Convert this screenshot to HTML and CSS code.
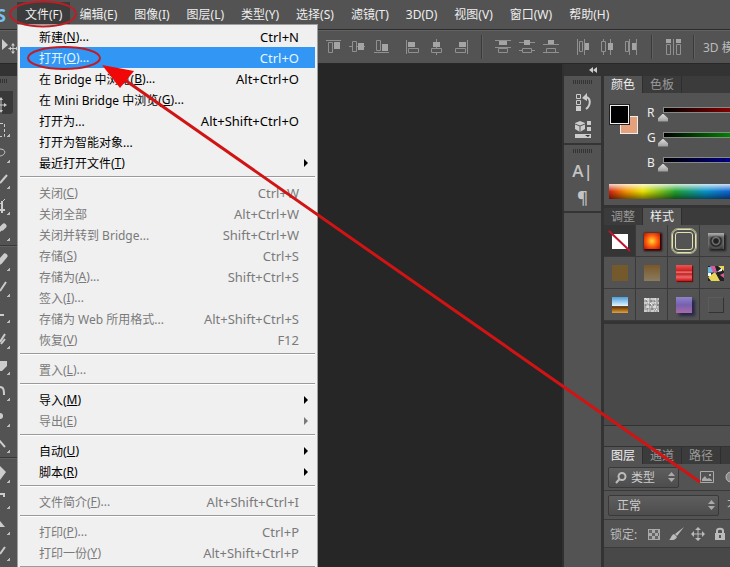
FILE: index.html
```html
<!DOCTYPE html>
<html lang="zh-CN">
<head>
<meta charset="utf-8">
<title>Photoshop</title>
<link rel="stylesheet" href="styles.css">
</head>
<body>
<div class="app">
  <header class="menubar">
    <span class="logo" aria-hidden="true">S</span>
    <nav class="menus">
      <button class="open">文件(F)</button><button>编辑(E)</button><button>图像(I)</button><button>图层(L)</button><button>类型(Y)</button><button>选择(S)</button><button>滤镜(T)</button><button>3D(D)</button><button>视图(V)</button><button>窗口(W)</button><button>帮助(H)</button>
    </nav>
  </header>

  <div class="options">
    <svg class="move-icon" width="17" height="20" viewBox="0 0 17 20"><path d="M2 2v11l6-5z" fill="#ccc"/><path d="M13 7v9M8.500 11.500h9" stroke="#ccc"/><path d="M11 8.500l2-2.500 2 2.500zM11 14.500l2 2.500 2-2.500zM11 9.500l-2.500 2 2.500 2zM16 9.500v4l1-1v-2z" fill="#ccc"/></svg>
    <div class="align">
      <button aria-label="顶对齐"><svg viewBox="0 0 24 24"><path d="M5 5.500h15M7.500 7.500h4v10h-4z"/><path class="f" d="M13 7h6v7h-6z"/></svg></button>
      <button aria-label="垂直居中对齐"><svg viewBox="0 0 24 24"><path d="M4 11.500h3M11 11.500h9M7.500 6.500h4v10h-4z"/><path class="f" d="M13 8h6v7h-6z"/></svg></button>
      <button aria-label="底对齐"><svg viewBox="0 0 24 24"><path d="M5 17.500h15M7.500 5.500h4v10h-4z"/><path class="f" d="M13 9h6v7h-6z"/></svg></button>
    </div>
    <div class="align">
      <button aria-label="左对齐"><svg viewBox="0 0 24 24"><path d="M5.500 5v14M7.500 13.500h10v4h-10z"/><path class="f" d="M7 7h7v5H7z"/></svg></button>
      <button aria-label="水平居中对齐"><svg viewBox="0 0 24 24"><path d="M11.500 4v9M11.500 17v3M6.500 13.500h10v4h-10z"/><path class="f" d="M8 7h7v5H8z"/></svg></button>
      <button aria-label="右对齐"><svg viewBox="0 0 24 24"><path d="M18.500 5v14M6.500 13.500h10v4h-10z"/><path class="f" d="M10 7h7v5h-7z"/></svg></button>
    </div>
    <i class="rule"></i>
    <div class="align">
      <button aria-label="按顶分布"><svg viewBox="0 0 24 24"><path d="M4 5.500h16M4 12.500h16M7.500 13.500h9v4h-9z"/><path class="f" d="M8 6h8v4H8z"/></svg></button>
      <button aria-label="按垂直居中分布"><svg viewBox="0 0 24 24"><path d="M4 7.500h16M4 15.500h3M17 15.500h3M7.500 13.500h9v4h-9z"/><path class="f" d="M9 5h6v5H9z"/></svg></button>
      <button aria-label="按底分布"><svg viewBox="0 0 24 24"><path d="M4 9.500h16M4 17.500h16M7.500 13.500h9v4h-9z"/><path class="f" d="M9 5h6v4H9z"/></svg></button>
    </div>
    <div class="align">
      <button aria-label="按左分布"><svg viewBox="0 0 24 24"><path d="M6.500 4v16M13.500 4v16M8.500 6.500h3v10h-3z"/><path class="f" d="M14 8h4v7h-4z"/></svg></button>
      <button aria-label="按水平居中分布"><svg viewBox="0 0 24 24"><path d="M8.500 4v3M8.500 16v4M15.500 4v16M6.500 6.500h4v10h-4z"/><path class="f" d="M13 8h5v7h-5z"/></svg></button>
      <button aria-label="按右分布"><svg viewBox="0 0 24 24"><path d="M10.500 4v16M17.500 4v16M6.500 6.500h3v10h-3z"/><path class="f" d="M13 8h4v7h-4z"/></svg></button>
    </div>
    <i class="rule"></i>
    <button aria-label="自动对齐图层"><svg viewBox="0 0 24 24"><path d="M5.500 9.500h4v10h-4zM15.500 9.500h4v10h-4zM12.500 4v16"/><path class="f" d="M5 4h5v4H5zM15 4h5v4h-5z"/></svg></button>
    <i class="rule"></i>
    <span class="mode">3D 模式:</span>
  </div>

  <div class="work">
    <aside class="tools" aria-label="工具">
      <div class="grip"><i></i></div>
      <button class="active" aria-label="移动"><svg viewBox="0 0 17 26"><path class="f" d="M1 9l2 3H-1zM1 25l2-3H-1zM7 17l-3-2v4z"/><path d="M1 11v12M0 17h5"/></svg></button>
      <button aria-label="选框"><svg viewBox="0 0 17 26"><path stroke-dasharray="3 2" d="M0 9.500h4.500v13H0"/></svg></button>
      <button aria-label="套索"><svg viewBox="0 0 17 26"><path d="M0 9c7 0 6 7-1 7"/></svg></button>
      <button aria-label="快速选择"><svg viewBox="0 0 17 26"><path class="w" d="M7 9l-7 8"/></svg></button>
      <button aria-label="裁剪"><svg viewBox="0 0 17 26"><path class="w" d="M2 9v12M0 18h5"/><path d="M5 7L0 12"/></svg></button>
      <button aria-label="吸管"><svg viewBox="0 0 17 26"><path class="b" d="M4 8l-2 2"/><path class="w" d="M3 9l-4 5"/></svg></button>
      <hr>
      <button aria-label="修复"><svg viewBox="0 0 17 26"><path class="b" d="M5 8l-5 6"/></svg></button>
      <button aria-label="画笔"><svg viewBox="0 0 17 26"><path class="w" d="M6 8l-6 9"/></svg></button>
      <button aria-label="图章"><svg viewBox="0 0 17 26"><path class="w" d="M0 15h4"/></svg></button>
      <button aria-label="历史画笔"><svg viewBox="0 0 17 26"><path class="w" d="M5 8l-5 8M5 13l-4 5"/></svg></button>
      <button aria-label="橡皮擦"><svg viewBox="0 0 17 26"><path class="f" d="M0 9h7v5l-5 5H0z"/><path stroke="#777" d="M0 15h3l4-5"/></svg></button>
      <button aria-label="渐变"><svg viewBox="0 0 17 26"><path class="w" d="M0 9c4 0 4 4 4 8"/></svg></button>
      <button aria-label="模糊"><svg viewBox="0 0 17 26"><circle class="f" cx="0" cy="12" r="3"/></svg></button>
      <button aria-label="减淡"><svg viewBox="0 0 17 26"><path class="w" d="M-1 10l6 7"/></svg></button>
      <hr>
      <button aria-label="钢笔"><svg viewBox="0 0 17 26"><path class="f" d="M0 6l6 6-6 8z"/></svg></button>
      <button aria-label="文字"><svg viewBox="0 0 17 26"><path class="w" d="M0 8h4v3"/></svg></button>
      <button aria-label="路径选择"><svg viewBox="0 0 17 26"><path class="f" d="M0 9l5 6H0z"/></svg></button>
      <button aria-label="形状"><svg viewBox="0 0 17 26"><path class="w" d="M5 9l-5 7"/></svg></button>
    </aside>

    <main class="canvas"></main>

    <div class="dock">
      <div class="dock-top"><svg width="8" height="6" viewBox="0 0 8 6"><path d="M4 0v6L0 3zM8 0v6L4 3z" fill="#ccc"/></svg></div>
      <div class="dock-body">
        <div class="strip">
          <div class="group">
            <i class="dots"></i>
            <button aria-label="历史记录"><svg viewBox="0 0 18 20"><path d="M2.500 2.500h4v4h-4zM2.500 8.500h4v4h-4z"/><path class="f" d="M2 14h5v5H2zM8 6l5-5v8z"/><path class="w" d="M12 5c5 1 5 8 0 12"/></svg></button>
            <button aria-label="属性"><svg viewBox="0 0 18 20"><path class="f" d="M6 1l5 2v6l-5 3-5-3V3zM13 1h4v4h-4zM13 7h4v4h-4zM1 14h16v4H1z"/><path class="edge" d="M1 4l5 2 5-2M6 6v6"/><path class="tri" d="M11 15h5l-2 2z"/></svg></button>
          </div>
          <div class="group">
            <i class="dots"></i>
            <button aria-label="字符" class="glyph">A|</button>
            <button aria-label="段落" class="glyph">¶</button>
          </div>
        </div>

        <div class="panels">
          <section class="panel color">
            <div class="tabs"><button class="on">颜色</button><button>色板</button></div>
            <div class="mix">
              <div class="swatch"><i class="back"></i><i class="front"></i></div>
              <div class="sliders">
                <label><span>R</span><input class="r" type="range" min="0" max="255" value="0"></label>
                <label><span>G</span><input class="g" type="range" min="0" max="255" value="0"></label>
                <label><span>B</span><input class="bl" type="range" min="0" max="255" value="0"></label>
              </div>
            </div>
            <div class="spectrum"></div>
          </section>

          <section class="panel">
            <div class="tabs"><button>调整</button><button class="on">样式</button></div>
            <div class="styles">
              <button class="sel" aria-label="无"><svg viewBox="0 0 32 32"><path fill="#fff" d="M8 9h16v15H8z"/><path stroke="#c0142c" stroke-width="2" d="M5 6l21 20"/></svg></button>
              <button aria-label="橙"><i class="s sun"></i></button>
              <button aria-label="描边"><i class="outline"></i></button>
              <button aria-label="黑"><i class="s dark"></i></button>
              <button aria-label="棕"><i class="s brown"></i></button>
              <button aria-label="棕渐变"><i class="s fade"></i></button>
              <button aria-label="红"><i class="s red"></i></button>
              <button aria-label="彩"><svg viewBox="0 0 32 32"><path fill="#222" d="M8 9h16v15H8z"/><path fill="#6bd" d="M8 10h4l5 5-9 1z"/><path fill="#e7d65a" d="M8 20l7-5 5 9h-9zM18 9h6v5z"/><path fill="#d25ca0" d="M10 9h5l2 7-4-1zM20 18l4-2v5z"/><path fill="#fff" d="M17 15l5-4v3zM8 16h3v3H8z"/></svg></button>
              <button aria-label="风景"><i class="s land"></i></button>
              <button aria-label="噪点"><svg viewBox="0 0 32 32"><path fill="#aaa" d="M8 9h15v14H8z"/><path stroke="#eee" stroke-dasharray="3 1 1 2" d="M8 10h15M8 14h15M10 18h13M8 22h15M12 9v14M19 9v14M9 9l14 14"/><path stroke="#666" stroke-dasharray="1 3 2 2" d="M10 12h13M9 16h14M11 20h12"/></svg></button>
              <button aria-label="紫"><i class="s violet"></i></button>
              <button aria-label="透明"><i class="s clear"></i></button>
            </div>
          </section>

          <div class="empty"></div>

          <section class="panel layers">
            <div class="tabs"><button class="on">图层</button><button>通道</button><button>路径</button></div>
            <div class="row">
              <div class="pick kind">
                <svg class="lens" width="12" height="12" viewBox="0 0 12 12"><circle cx="7" cy="4.500" r="3.500"/><path d="M4.500 7L1 11"/></svg>
                <select aria-label="滤镜类型"><option>类型</option></select>
                <svg class="updown" width="7" height="10" viewBox="0 0 7 10"><path d="M0 4l3.500-4L7 4zM0 6l3.500 4L7 6z"/></svg>
              </div>
              <svg class="pic" width="14" height="12" viewBox="0 0 14 12"><path fill="none" stroke="#aaa" d="M.5.500h13v11H.5z"/><path fill="#aaa" d="M2 10V8l3-3 2 3 2-1 3 2v1zM9 3h2v2H9z"/></svg>
              <svg class="adj" width="12" height="12" viewBox="0 0 12 12"><circle cx="6" cy="6" r="5" fill="#888" stroke="#bbb"/></svg>
            </div>
            <div class="row blend">
              <div class="pick mode-pick">
                <select aria-label="混合模式"><option>正常</option></select>
                <svg class="updown" width="7" height="10" viewBox="0 0 7 10"><path d="M0 4l3.500-4L7 4zM0 6l3.500 4L7 6z"/></svg>
              </div>
              <span>不透明度:</span>
            </div>
            <div class="row lock">
              <span>锁定:</span>
              <button aria-label="锁定透明像素"><svg viewBox="0 0 16 16"><path fill="#aaa" d="M2 3h12v11H2z"/><path fill="#666" d="M3 4h3v3H3zM9 4h3v3H9zM6 7h3v3H6zM12 7h1v3h-1zM3 10h3v3H3zM9 10h3v3H9z"/></svg></button>
              <button aria-label="锁定图像像素"><svg viewBox="0 0 16 16"><path fill="#bbb" d="M16 1L9 10l-2-2zM6 8l3 3c-2 4-5 3-8 3 2-1 2-5 5-6z"/></svg></button>
              <button aria-label="锁定位置"><svg viewBox="0 0 16 16"><path fill="none" stroke="#bbb" d="M8 2v12M2 8h12"/><path fill="#bbb" d="M5 4l3-3 3 3zM5 12l3 3 3-3zM4 5L1 8l3 3zM12 5l3 3-3 3z"/></svg></button>
              <button aria-label="锁定全部"><svg viewBox="0 0 16 16"><path fill="#bbb" d="M3 7h10v7H3z"/><path fill="none" stroke="#bbb" stroke-width="2" d="M5 8V5c0-3 6-3 6 0v3"/><path fill="#555" d="M7 9h2v3H7z"/></svg></button>
            </div>
            <div class="list"></div>
          </section>
        </div>
      </div>
    </div>
  </div>

  <div class="file-menu" role="menu">
    <button>新建(<u>N</u>)...<kbd>Ctrl+N</kbd></button>
    <button class="hot">打开(<u>O</u>)...<kbd>Ctrl+O</kbd></button>
    <button>在 Bridge 中浏览(<u>B</u>)...<kbd>Alt+Ctrl+O</kbd></button>
    <button>在 Mini Bridge 中浏览(<u>G</u>)...</button>
    <button>打开为...<kbd>Alt+Shift+Ctrl+O</kbd></button>
    <button>打开为智能对象...</button>
    <button class="sub">最近打开文件(<u>T</u>)</button>
    <hr>
    <button disabled>关闭(<u>C</u>)<kbd>Ctrl+W</kbd></button>
    <button disabled>关闭全部<kbd>Alt+Ctrl+W</kbd></button>
    <button disabled>关闭并转到 Bridge...<kbd>Shift+Ctrl+W</kbd></button>
    <button disabled>存储(<u>S</u>)<kbd>Ctrl+S</kbd></button>
    <button disabled>存储为(<u>A</u>)...<kbd>Shift+Ctrl+S</kbd></button>
    <button disabled>签入(<u>I</u>)...</button>
    <button disabled>存储为 Web 所用格式...<kbd>Alt+Shift+Ctrl+S</kbd></button>
    <button disabled>恢复(<u>V</u>)<kbd>F12</kbd></button>
    <hr>
    <button disabled>置入(<u>L</u>)...</button>
    <hr>
    <button class="sub">导入(<u>M</u>)</button>
    <button class="sub" disabled>导出(<u>E</u>)</button>
    <hr>
    <button class="sub">自动(<u>U</u>)</button>
    <button class="sub">脚本(<u>R</u>)</button>
    <hr>
    <button disabled>文件简介(<u>F</u>)...<kbd>Alt+Shift+Ctrl+I</kbd></button>
    <hr>
    <button disabled>打印(<u>P</u>)...<kbd>Ctrl+P</kbd></button>
    <button disabled>打印一份(<u>Y</u>)<kbd>Alt+Shift+Ctrl+P</kbd></button>
    <hr>
  </div>

  <svg class="marks" width="730" height="567" viewBox="0 0 730 567" aria-hidden="true">
    <g fill="none" stroke="#c01c24" stroke-width="2"><ellipse cx="43" cy="14" rx="33" ry="12.500"/><ellipse cx="64" cy="58" rx="36" ry="11"/></g>
    <path d="M122 78L700 482" stroke="#d01414" stroke-width="3"/>
    <path d="M102 65l32 6-14 17z" fill="#f00808"/>
  </svg>
</div>
</body>
</html>
```
FILE: styles.css
```css
* { box-sizing: border-box; }
body, button, select, kbd {
  font-family: "Noto Sans", "Noto Sans CJK SC", sans-serif;
  font-size: 12px;
}
body { margin: 0; overflow: hidden; background: #262626; color: #ddd; }
button { border: 0; padding: 0; background: none; color: inherit; }
hr { margin: 0; border: 0; }
svg { display: block; flex: none; }

.app { position: relative; display: flex; flex-direction: column; height: 100vh; overflow: hidden; }

.menubar { display: flex; align-items: center; height: 29px; flex: none; background: #535353; color: #eee; }
.logo { width: 17px; flex: none; margin-left: -4px; margin-right: 4px; color: #7cc0ee; font-weight: bold; font-size: 18px; line-height: 28px; }
.menus { display: flex; gap: 1px; height: 25px; }
.menus button { padding: 0 8px; white-space: nowrap; line-height: 25px; }
.menus .open { background: #3c3c3c; }

.options { display: flex; align-items: center; height: 34px; flex: none; background: #535353; border-top: 1px solid #2c2c2c; box-shadow: inset 0 1px #626262; overflow: hidden; }
.move-icon { margin-right: 304px; }
.align { display: flex; }
.align + .align { margin-left: 8px; }
.options button { width: 24px; height: 24px; flex: none; }
.options button path { fill: none; stroke: #909090; }
.options button path.f { fill: #a4a4a4; stroke: none; }
.rule { width: 2px; height: 24px; margin: 0 8px; flex: none; background: #3a3a3a; border-right: 1px solid #606060; }
.mode { white-space: nowrap; color: #bbb; }

.work { display: flex; flex: 1; min-height: 0; border-top: 1px solid #282828; }
.tools { display: flex; flex-direction: column; width: 17px; flex: none; background: #535353; }
.grip { height: 24px; flex: none; padding-top: 15px; background: linear-gradient(#333 12px, #535353 12px); }
.grip i { display: block; width: 8px; height: 4px; background: repeating-linear-gradient(90deg, #333 0 1px, #535353 1px 2px); }
.tools button { position: relative; height: 26px; flex: none; overflow: hidden; }
.tools button::after { content: ""; position: absolute; right: 7px; bottom: 3px; width: 3px; height: 3px; background: linear-gradient(135deg, transparent 45%, #bbb 50%); }
.tools .active { background: linear-gradient(transparent 3px, #393939 3px); margin-right: 4px; border-radius: 3px; }
.tools .active::after { display: none; }
.tools svg { width: 17px; height: 26px; }
.tools path { fill: none; stroke: #ccc; }
.tools .w { stroke-width: 2; }
.tools .b { stroke-width: 5; stroke-linecap: round; }
.tools .f { fill: #ccc; stroke: none; }
.tools hr { height: 4px; flex: none; background: linear-gradient(transparent 1px, #383838 1px 2px, #606060 2px 3px, transparent 3px); }

.canvas { flex: 1; background: #262626; }

.dock { display: flex; flex-direction: column; width: 168px; flex: none; border-left: 2px solid #303030; background: #333; }
.dock-top { height: 12px; flex: none; padding: 3px 25px; }
.dock-body { display: flex; flex: 1; min-height: 0; }
.strip { width: 37px; flex: none; background: #535353; }
.group { display: flex; flex-direction: column; align-items: center; gap: 8px; height: 69px; padding-top: 4px; border-bottom: 2px solid #343434; }
.group + .group { height: 68px; }
.dots { width: 20px; height: 4px; flex: none; background: repeating-linear-gradient(90deg, #333 0 1px, #535353 1px 2px); }
.group button { height: 20px; }
.group svg { width: 18px; height: 20px; }
.group path { fill: none; stroke: #ccc; }
.group .f { fill: #ccc; stroke: none; }
.group .w { stroke-width: 2; }
.group .edge { stroke: #555; }
.group .tri { fill: #333; stroke: none; }
.group .glyph { font-family: "Open Sans", "Noto Sans", sans-serif; font-size: 17px; font-weight: 600; line-height: 16px; height: 16px; margin-top: 2px; color: #c4c4c4; }

.panels { display: flex; flex-direction: column; flex: 1; min-width: 0; margin-left: 3px; overflow: hidden; }
.panel { background: #535353; border-bottom: 3px solid #343434; }
.tabs { display: flex; height: 17px; background: #3b3b3b; }
.tabs button { padding: 0 7px; line-height: 17px; color: #999; border-right: 1px solid #2e2e2e; }
.tabs .on { background: #535353; color: #eee; }
.color { height: 132px; }
.mix { display: flex; height: 75px; margin-top: 12px; }
.swatch { position: relative; width: 43px; flex: none; }
.swatch i { position: absolute; width: 18px; height: 18px; border: 1px solid #eee; }
.swatch .front { left: 6px; top: 0; width: 19px; height: 19px; background: #000; outline: 1px solid #222; }
.back { left: 16px; top: 11px; background: #e4a17c; }
.sliders { flex: 1; min-width: 0; overflow: hidden; }
.sliders label { display: flex; align-items: flex-start; width: 180px; height: 25px; line-height: 15px; color: #eee; }
.sliders span { width: 11px; }
.sliders input { appearance: none; width: 140px; height: 18px; margin: 0; background: linear-gradient(90deg, #000, var(--end)) 6px 3px / 128px 4px no-repeat, linear-gradient(#888, #888) 5px 2px / 129px 6px no-repeat; }
.sliders .r { --end: #f00; }
.sliders .g { --end: #0f0; }
.sliders .bl { --end: #00f; }
.sliders input::-webkit-slider-thumb { appearance: none; width: 10px; height: 8px; margin-top: 7px; background: linear-gradient(#ddd, #999); clip-path: polygon(50% 0, 100% 60%, 100% 100%, 0 100%, 0 60%); }
.spectrum { height: 15px; margin: 4px 0 0 5px; background: linear-gradient(rgba(255,255,255,.8), transparent 50%, rgba(0,0,0,.5)), linear-gradient(90deg, #d02010, #f09000 14%, #e8e000 28%, #20a030 55%, #0890c8 80%, #1060d0); }

.styles { display: grid; grid-template-columns: repeat(4, 32px); grid-auto-rows: 32px; }
.styles button { display: flex; align-items: center; justify-content: center; border-right: 1px solid #3a3a3a; border-bottom: 1px solid #3a3a3a; }
.styles svg { width: 32px; height: 32px; }
.styles .sel { background: #353535; }
.s { width: 16px; height: 16px; }
.sun { background: radial-gradient(#fd3, #f61 45%, #b10); box-shadow: 1px 1px 2px 1px #300; }
.outline { width: 24px; height: 24px; border: 4px double #e2e2b4; border-radius: 6px; outline: 1px solid #a8a880; }
.dark { background: radial-gradient(#222 20%, #777 30%, #222 45%, #555 60%, #222); box-shadow: 2px 2px 2px #222, inset 0 3px 3px #aaa; }
.brown { background: #74592c; }
.fade { background: linear-gradient(#79582b, #8b7b5f); }
.red { background: linear-gradient(#e55, #c22 35%, #e77 45%, #b22 55%, #e66 75%, #c11); box-shadow: 1px 1px 1px #611; }
.land { background: linear-gradient(#4c9edb, #e0f4ff 55%, #5a3008 60%, #a66914 80%, #dca14c); }
.violet { background: linear-gradient(#8e83cb, #7660ae 50%, #aa6aa5); box-shadow: 3px 3px 3px #26264a; }
.clear { border: 1px solid #5c5c5c; border-right-color: #333; border-bottom-color: #333; }
.empty { flex: 1; background: #494949; }

.layers { height: 142px; border-top: 1px solid #333; background: #484848; border-bottom: 0; padding-top: 20px; box-shadow: inset 0 20px #505050; }
.layers .tabs { border-top: 1px solid #333; height: 18px; }
.row { display: flex; align-items: center; height: 27px; padding-left: 4px; background: #535353; border-bottom: 1px solid #3a3a3a; white-space: nowrap; overflow: hidden; color: #bbb; }
.blend { height: 29px; }
.blend > span { margin-left: 8px; }
.pick { position: relative; flex: none; height: 21px; }
.kind { width: 71px; }
.mode-pick { width: 111px; }
.pick select { appearance: none; width: 100%; height: 100%; padding: 0 8px; border: 1px solid #393939; border-radius: 2px; background: linear-gradient(#5e5e5e, #4d4d4d); color: #ccc; }
.kind select { padding-left: 22px; }
.pick svg { position: absolute; top: 5px; }
.lens { left: 7px; fill: none; stroke: #bbb; stroke-width: 2; }
.updown { right: 4px; fill: #aaa; }
.pic { margin-left: 21px; }
.adj { margin-left: 11px; }
.lock { height: 28px; gap: 6px; padding-left: 6px; }
.lock span { margin-right: 3px; }
.lock button { width: 16px; height: 16px; flex: none; }
.lock svg { width: 16px; height: 16px; }

.file-menu { position: absolute; left: 17px; top: 24px; width: 301px; padding: 1px 2px; border: 1px solid #a0a0a0; background: #f0f0f0; color: #000; }
.file-menu button { display: flex; align-items: center; width: 100%; height: 21px; padding: 0 16px 0 19px; white-space: pre; }
.file-menu kbd { margin-left: auto; font-size: 13px; }
.file-menu button:disabled { color: #7a7a7a; }
.file-menu .hot { background: #3296f5; color: #e4f6ff; }
.file-menu u { text-underline-offset: 1px; }
.file-menu .sub::after { content: ""; margin-left: auto; margin-right: -9px; border: 4px solid transparent; border-left: 4px solid; border-right: 0; }
.file-menu hr { height: 9px; background: linear-gradient(transparent 3px, #9a9a9a 3px 4px, #fff 4px 5px, transparent 5px); }

.marks { position: absolute; left: 0; top: 0; pointer-events: none; }
```
